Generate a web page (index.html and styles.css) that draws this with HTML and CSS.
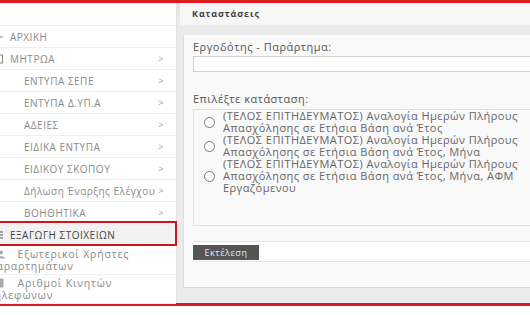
FILE: index.html
```html
<!DOCTYPE html>
<html lang="el">

<head>
    <meta charset="UTF-8">
    <meta name="viewport" content="width=device-width, initial-scale=1.0">
    <title>Καταστάσεις</title>
    <link rel="stylesheet" href="styles.css">
</head>

<body>
    <div class="frame">
        <aside class="sidebar">
            <div class="sidebar-top"></div>
            <ul class="nav">
                <li class="nav-item">
                    <svg class="ico" viewBox="0 0 10 10"><path d="M1 5h8M5 1v8" stroke="#888" stroke-width="1.2" fill="none"/></svg>
                    <span>ΑΡΧΙΚΗ</span>
                </li>
                <li class="nav-item">
                    <svg class="ico" viewBox="0 0 10 10"><rect x="1.5" y="1" width="7" height="8" stroke="#888" stroke-width="1" fill="none"/></svg>
                    <span>ΜΗΤΡΩΑ</span><span class="chev">&gt;</span>
                </li>
                <li class="nav-item sub"><span>ΕΝΤΥΠΑ ΣΕΠΕ</span><span class="chev">&gt;</span></li>
                <li class="nav-item sub"><span>ΕΝΤΥΠΑ Δ.ΥΠ.Α</span><span class="chev">&gt;</span></li>
                <li class="nav-item sub"><span>ΑΔΕΙΕΣ</span><span class="chev">&gt;</span></li>
                <li class="nav-item sub"><span>ΕΙΔΙΚΑ ΕΝΤΥΠΑ</span><span class="chev">&gt;</span></li>
                <li class="nav-item sub"><span>ΕΙΔΙΚΟΥ ΣΚΟΠΟΥ</span><span class="chev">&gt;</span></li>
                <li class="nav-item sub"><span>Δήλωση Έναρξης Ελέγχου</span><span class="chev">&gt;</span></li>
                <li class="nav-item sub"><span>ΒΟΗΘΗΤΙΚΑ</span><span class="chev">&gt;</span></li>
                <li class="nav-item active">
                    <svg class="ico" viewBox="0 0 10 10"><path d="M1 2h8M1 5h8M1 8h8" stroke="#555" stroke-width="1.2" fill="none"/></svg>
                    <span>ΕΞΑΓΩΓΗ ΣΤΟΙΧΕΙΩΝ</span>
                </li>
                <li class="nav-item wrap">
                    <svg class="ico" viewBox="0 0 10 10"><circle cx="5" cy="3.5" r="2" fill="#aaa"/><path d="M1 9.5c0-3 8-3 8 0z" fill="#aaa"/></svg>
                    Εξωτερικοί Χρήστες Παραρτημάτων
                </li>
                <li class="nav-item wrap">
                    <svg class="ico" viewBox="0 0 10 10"><rect x="2.5" y="0.5" width="5" height="9" rx="1" fill="#aaa"/></svg>
                    Αριθμοί Κινητών Τηλεφώνων
                </li>
            </ul>
        </aside>

        <main class="content">
            <div class="page-head">Καταστάσεις</div>
            <div class="panel">
                <label class="field-label">Εργοδότης - Παράρτημα:</label>
                <input type="text" class="field-input">

                <label class="field-label choose">Επιλέξτε κατάσταση:</label>
                <div class="options">
                    <label class="option">
                        <span class="radio"></span>
                        <span class="option-text">(ΤΕΛΟΣ ΕΠΙΤΗΔΕΥΜΑΤΟΣ) Αναλογία Ημερών Πλήρους Απασχόλησης σε Ετήσια Βάση ανά Έτος</span>
                    </label>
                    <label class="option">
                        <span class="radio"></span>
                        <span class="option-text">(ΤΕΛΟΣ ΕΠΙΤΗΔΕΥΜΑΤΟΣ) Αναλογία Ημερών Πλήρους Απασχόλησης σε Ετήσια Βάση ανά Έτος, Μήνα</span>
                    </label>
                    <label class="option">
                        <span class="radio"></span>
                        <span class="option-text">(ΤΕΛΟΣ ΕΠΙΤΗΔΕΥΜΑΤΟΣ) Αναλογία Ημερών Πλήρους Απασχόλησης σε Ετήσια Βάση ανά Έτος, Μήνα, ΑΦΜ Εργαζόμενου</span>
                    </label>
                </div>

                <div class="actions">
                    <button class="btn-run">Εκτέλεση</button>
                </div>
            </div>
        </main>
    </div>
</body>

</html>
```

FILE: styles.css
```css
body {
    margin: 0;
    font-family: 'Open Sans', 'DejaVu Sans', sans-serif;
    background-color: #ffffff;
    overflow: hidden;
}

.frame {
    display: flex;
    width: 560px;
    height: 300px;
    margin-left: -14px;
    border-top: 3px solid #dc1a1f;
    border-bottom: 3px solid #dc1a1f;
}

/* sidebar */

.sidebar {
    width: 190px;
    flex-shrink: 0;
    background-color: #ffffff;
    border-right: 1px solid #e2e2e2;
}

.sidebar-top {
    height: 22px;
    border-bottom: 1px solid #ececec;
}

.nav {
    list-style: none;
    margin: 0;
    padding: 0;
}

.nav-item {
    position: relative;
    display: flex;
    align-items: center;
    height: 21px;
    padding-left: 8px;
    border-bottom: 1px solid #f0f0f0;
    color: #8a8a8a;
    font-size: 10px;
    letter-spacing: 0.5px;
    white-space: nowrap;
}

.nav-item .ico {
    width: 10px;
    height: 10px;
    margin-right: 6px;
    flex-shrink: 0;
}

.nav-item.sub {
    padding-left: 38px;
}

.chev {
    margin-left: auto;
    margin-right: 12px;
    color: #9a9a9a;
    font-size: 9px;
}

.nav-item.active {
    background-color: #f2f2f2;
    color: #444;
}

.nav-item.active::after {
    content: "";
    position: absolute;
    top: -3px;
    bottom: -1px;
    left: 0;
    right: -1px;
    border: 2.5px solid #d0151b;
}

.nav-item.wrap {
    display: block;
    height: auto;
    padding: 2px 4px 2px 2px;
    line-height: 12px;
    font-size: 10.5px;
    letter-spacing: 0.8px;
    white-space: normal;
}

.nav-item.wrap .ico {
    vertical-align: -1px;
    margin-left: 8px;
    margin-right: 8px;
}

/* content */

.content {
    flex: 1;
    display: flex;
    flex-direction: column;
    background: linear-gradient(#e2e2e2, #ebebeb 10px);
    padding-left: 6px;
}

.page-head {
    height: 22px;
    margin-left: -3px;
    padding-left: 12px;
    line-height: 22px;
    background-color: #f7f7f7;
    color: #3e3e3e;
    font-size: 9px;
    font-weight: 700;
    letter-spacing: 0.9px;
}

.panel {
    margin-top: 10px;
    height: 246px;
    padding: 6px 0 0 9px;
    background-color: #f9f9f9;
    border-left: 1px solid #dddddd;
    border-bottom: 1px solid #d6d6d6;
}

.field-label {
    display: block;
    line-height: 12px;
    color: #555;
    font-size: 11px;
    letter-spacing: 0.5px;
}

.field-label.choose {
    margin-top: 21px;
}

.field-input {
    display: block;
    width: 100%;
    height: 16px;
    margin-top: 3px;
    border: 1px solid #cfcfcf;
    background-color: #ffffff;
    box-sizing: border-box;
}

.options {
    height: 117px;
    margin-top: 4px;
    padding: 0 12px 0 10px;
    border: 1px solid #e0e0e0;
    background-color: #f9f9f9;
    box-sizing: border-box;
}

.option {
    display: flex;
    align-items: center;
    color: #666;
    font-size: 11px;
    line-height: 12px;
    letter-spacing: 0.45px;
}

.radio {
    width: 11px;
    height: 11px;
    margin-right: 8px;
    border: 1px solid #7a7a7a;
    border-radius: 50%;
    background-color: #ffffff;
    box-sizing: border-box;
    flex-shrink: 0;
}

.option-text {
    max-width: 312px;
}

.actions {
    margin-top: 15px;
    padding: 3px 0 1px;
    background-color: #ffffff;
    border-top: 1px solid #e3e3e3;
    border-bottom: 1px solid #e3e3e3;
}

.btn-run {
    display: block;
    width: 66px;
    height: 15px;
    padding: 0;
    border: none;
    background-color: #555;
    color: #e6e6e6;
    font-family: 'Open Sans', sans-serif;
    font-size: 9px;
    letter-spacing: 0.6px;
}
```
